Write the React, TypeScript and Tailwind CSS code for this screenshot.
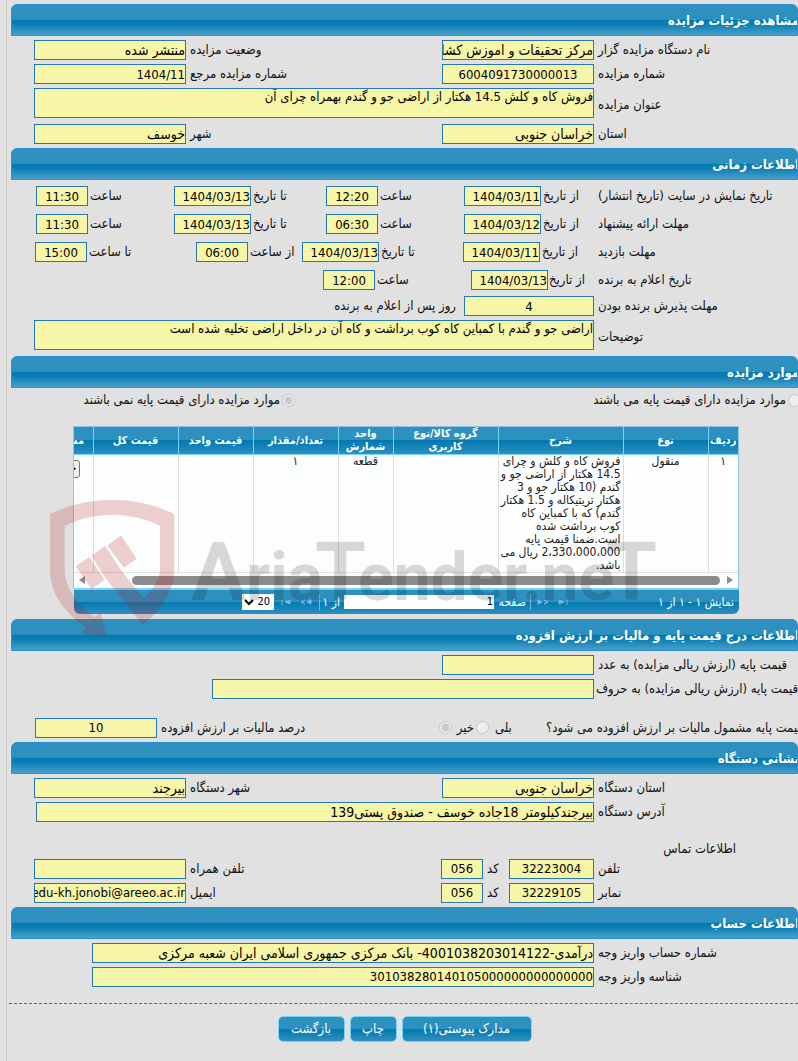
import React from "react";

function SectionTitle({ children }: { children: React.ReactNode }) {
    return (
        <h2 className="h-8 overflow-hidden rounded-t-md border border-[#2b8edb] bg-[linear-gradient(to_bottom,#2e90bf_0%,#2e90bf_48%,#0079b1_50%,#0b7fb4_65%,#4a9fc8_100%)] text-[13px] leading-[32px] font-bold text-white">
            <span className="-mr-[2px] block whitespace-nowrap">{children}</span>
        </h2>
    );
}

interface FieldProps {
    id: string;
    label: string;
    value?: string;
    labelClass: string;
    inputClass: string;
}

function Field({ id, label, value = "", labelClass, inputClass }: FieldProps) {
    // Persian values are set one step larger than plain numbers
    const size = /[آ-ی]/.test(value) ? "text-[14px]" : "text-[13px]";
    return (
        <>
            <label htmlFor={id} className={`flex justify-end whitespace-nowrap ${labelClass}`}>
                {label}
            </label>
            <input
                id={id}
                readOnly
                defaultValue={value}
                className={`h-5 border border-[#2478ab] bg-[#f7f5a8] p-0 text-black outline-none ${size} ${inputClass}`}
            />
        </>
    );
}

function AreaField({ id, label, value }: { id: string; label: string; value: string }) {
    return (
        <div className="mt-1 flex items-center">
            <label htmlFor={id} className="flex w-51 shrink-0 justify-end pt-1 pl-1 whitespace-nowrap">
                {label}
            </label>
            <textarea
                id={id}
                readOnly
                defaultValue={value}
                className="h-[30px] min-w-0 flex-1 resize-none overflow-hidden border border-[#2478ab] bg-[#f7f5a8] p-0 text-[13px] leading-4 text-black outline-none"
            />
        </div>
    );
}

const mainLabel = "w-51 shrink-0 pl-1";
const wideInput = "w-38 shrink-0";
const dateInput = "w-[77px] shrink-0";
const timeInput = "w-13 shrink-0 text-center";

const columns = [
    { title: "ردیف", width: "w-[30px]", value: "۱" },
    { title: "نوع", width: "w-[85px]", value: "منقول" },
    {
        title: "شرح",
        width: "w-[125px]",
        value: "فروش کاه و کلش و چرای\n14.5 هکتار از اراضی جو و\nگندم (10 هکتار جو و 3\nهکتار تریتیکاله و 1.5 هکتار\nگندم) که با کمباین کاه\nکوب برداشت شده\nاست.ضمنا قیمت پایه\n2،330،000،000 ریال می\nباشد.",
    },
    { title: "گروه کالا/نوع\nکاربری", width: "w-[105px]", value: "" },
    { title: "واحد\nشمارش", width: "w-[55px]", value: "قطعه" },
    { title: "تعداد/مقدار", width: "w-[85px]", value: "۱" },
    { title: "قیمت واحد", width: "w-[75px]", value: "" },
    { title: "قیمت کل", width: "w-[85px]", value: "" },
    { title: "مشخصات کالا", width: "w-[85px]", value: "جزئیات" },
];

function PagerIcon({ label, path }: { label: string; path: string }) {
    return (
        <button type="button" aria-label={label} className="h-3 w-3 shrink-0">
            <svg viewBox="0 0 12 12" className="h-3 w-3">
                <path d={path} className="fill-[#7db8d8] stroke-[#7db8d8]" />
            </svg>
        </button>
    );
}

function ItemsGrid() {
    return (
        <div className="relative mr-[59px] ml-[62px]">
            <div className="overflow-hidden border border-b-0 border-[#8cc3e6] bg-[#fcfdfd]">
                <table className="w-[730px] table-fixed border-collapse text-[12px] leading-[13px]">
                    <thead>
                        <tr className="h-[27px] bg-[linear-gradient(to_bottom,#2e90bf_0%,#2e90bf_48%,#0079b1_50%,#2e90bf_100%)] text-[11px] text-white">
                            {columns.map((c) => (
                                <th key={c.title} className={`border-l border-b border-[#77d5f7] p-0 text-center align-middle font-bold whitespace-pre ${c.width}`}>
                                    {c.title}
                                </th>
                            ))}
                        </tr>
                    </thead>
                    <tbody>
                        <tr>
                            {columns.map((c, i) => (
                                <td
                                    key={c.title}
                                    className={`border-l border-b border-[#dddddd] p-0 align-top text-[#222] ${i === 2 ? "pr-[2px] text-right whitespace-pre" : "text-center"}`}
                                >
                                    {i === 8 ? (
                                        <button type="button" className="mt-[5px] h-[18px] w-[58px] rounded-[3px] border border-[#767676] bg-[#efefef] pr-[2px] text-right text-black">
                                            {c.value}
                                        </button>
                                    ) : (
                                        c.value
                                    )}
                                </td>
                            ))}
                        </tr>
                    </tbody>
                </table>
                <div className="flex h-[15px] items-center gap-[7px] px-[5px]">
                    <svg viewBox="0 0 6 8" className="h-2 w-1.5 fill-[#8b8b8b]">
                        <path d="M0 0L6 4L0 8Z" />
                    </svg>
                    <div className="ml-[40px] h-[9px] flex-1 rounded-full bg-[#8b8b8b]" />
                    <svg viewBox="0 0 6 8" className="h-2 w-1.5 fill-[#8b8b8b]">
                        <path d="M6 0L0 4L6 8Z" />
                    </svg>
                </div>
            </div>

            {/* Pager */}
            <div className="ml-px flex h-[26px] items-center rounded-b-md border-t-2 border-[#77d5f7] bg-[linear-gradient(to_bottom,#2e90bf_0%,#2e90bf_48%,#0079b1_50%,#2e90bf_100%)] px-[5px] text-[12px] whitespace-nowrap text-white">
                <span className="w-[165px]">نمایش ۱ - ۱ از ۱</span>
                <PagerIcon label="آخرین" path="M2 4L7 6L2 8ZM10 3V9" />
                <span className="w-2" />
                <PagerIcon label="بعدی" path="M1 4L5 6L1 8ZM7 4L11 6L7 8L11 6Z" />
                <span className="mr-[6px] h-4 w-px bg-[#77b5d8]" />
                <label htmlFor="page" className="mr-1 w-8">صفحه</label>
                <input id="page" defaultValue="1" className="h-[14px] w-[150px] bg-white px-px text-[11px] text-black" />
                <span className="mr-1 w-5">از ۱</span>
                <span className="h-4 w-px bg-[#77b5d8]" />
                <span className="w-[7px]" />
                <PagerIcon label="قبلی" path="M11 4L7 6L11 8ZM5 4L1 6L5 8L1 6Z" />
                <span className="w-2" />
                <PagerIcon label="اولین" path="M10 4L5 6L10 8ZM2 3V9" />
                <select aria-label="تعداد در صفحه" defaultValue="20" className="mr-[6px] h-4 w-8 bg-white text-[11px] text-black">
                    <option>20</option>
                </select>
            </div>

            {/* Watermark */}
            <div aria-hidden="true" className="pointer-events-none absolute top-[72px] -left-[23px] flex items-start" dir="ltr">
                <svg viewBox="150 265 375 420" className="h-[140px] w-[125px] shrink-0 fill-[#b4141a]/20">
                    <path d="M150 313Q240 270 338 270Q435 270 523 313V480C523 545 480 605 428 646L320 510L362 480L432 568C465 530 480 505 480 480V348Q410 315 338 315Q265 315 194 348V480C194 540 240 590 285 622L303 608L320 682L243 672L258 655C200 610 150 560 150 480Z" />
                    <path d="M322 408L363 377L410 447L372 474ZM274 438L316 408L362 480L320 510ZM227 470L268 442L314 511L275 538Z" />
                </svg>
                <span className="mt-[26px] ml-4 font-['Roboto',sans-serif] text-[66px] leading-[96px] font-bold whitespace-nowrap text-black/15">
                    <span className="text-[82px]">A</span>ria<span className="-mx-2 text-[82px]">T</span>ender.ne<span className="-ml-2 text-[82px]">T</span>
                </span>
            </div>
        </div>
    );
}

function ActionButton({ children, width }: { children: React.ReactNode; width: string }) {
    return (
        <button
            type="button"
            className={`h-[26px] rounded-[5px] border border-[#77d5f7] bg-[linear-gradient(to_bottom,#2e90bf_0%,#2e90bf_48%,#0079b1_50%,#2e90bf_100%)] text-[13px] text-white ${width}`}
        >
            {children}
        </button>
    );
}

export default function App() {
    return (
        <div className="min-h-screen overflow-hidden bg-[#e1e1e1] pl-[6px]" dir="rtl">
            <main className="min-h-screen border-l border-[#c8c8c8] pt-1 pb-[18px] pl-1 font-['DejaVu_Sans_Condensed','DejaVu_Sans',sans-serif] text-[13px] leading-4 text-[#111]">
                <SectionTitle>مشاهده جزئیات مزایده</SectionTitle>
                <div className="pt-1 pb-1 pl-[23px]">
                    <div className="flex items-center">
                        <Field id="org" label="نام دستگاه مزایده گزار" value="مرکز تحقیقات و اموزش کشاورزی" labelClass={mainLabel} inputClass={wideInput} />
                        <Field id="status" label="وضعیت مزایده" value="منتشر شده" labelClass="flex-1 pl-1" inputClass={wideInput} />
                    </div>
                    <div className="mt-1 flex items-center">
                        <Field id="number" label="شماره مزایده" value="6004091730000013" labelClass={mainLabel} inputClass="w-38 shrink-0 text-center" />
                        <Field id="ref" label="شماره مزایده مرجع" value="1404/11" labelClass="flex-1 pl-1" inputClass={wideInput} />
                    </div>
                    <AreaField id="subject" label="عنوان مزایده" value="فروش کاه و کلش 14.5 هکتار از اراضی جو و گندم بهمراه چرای آن" />
                    <div className="mt-[6px] flex items-center">
                        <Field id="province" label="استان" value="خراسان جنوبی" labelClass={mainLabel} inputClass={wideInput} />
                        <Field id="city" label="شهر" value="خوسف" labelClass="flex-1 pl-1" inputClass={wideInput} />
                    </div>
                </div>

                <SectionTitle>اطلاعات زمانی</SectionTitle>
                <div className="pt-[6px] pb-[6px] pl-[23px]">
                    <div className="flex flex-col gap-2">
                        <div className="flex items-center">
                            <span className="flex w-51 shrink-0 justify-end pl-1">تاریخ نمایش در سایت (تاریخ انتشار)</span>
                            <Field id="show-from" label="از تاریخ" value="1404/03/11" labelClass="w-[53px] pl-[2px]" inputClass={dateInput} />
                            <Field id="show-from-t" label="ساعت" value="12:20" labelClass="w-[86px] pl-[2px]" inputClass={timeInput} />
                            <Field id="show-to" label="تا تاریخ" value="1404/03/13" labelClass="w-[75px] pl-[2px]" inputClass={dateInput} />
                            <Field id="show-to-t" label="ساعت" value="11:30" labelClass="w-[86px] pl-[2px]" inputClass={timeInput} />
                        </div>
                        <div className="flex items-center">
                            <span className="flex w-51 shrink-0 justify-end pl-1">مهلت ارائه پیشنهاد</span>
                            <Field id="offer-from" label="از تاریخ" value="1404/03/12" labelClass="w-[53px] pl-[2px]" inputClass={dateInput} />
                            <Field id="offer-from-t" label="ساعت" value="06:30" labelClass="w-[86px] pl-[2px]" inputClass={timeInput} />
                            <Field id="offer-to" label="تا تاریخ" value="1404/03/13" labelClass="w-[75px] pl-[2px]" inputClass={dateInput} />
                            <Field id="offer-to-t" label="ساعت" value="11:30" labelClass="w-[86px] pl-[2px]" inputClass={timeInput} />
                        </div>
                        <div className="flex items-center">
                            <span className="flex w-51 shrink-0 justify-end pl-1">مهلت بازدید</span>
                            <Field id="visit-from" label="از تاریخ" value="1404/03/11" labelClass="w-[54px] pl-[2px]" inputClass={dateInput} />
                            <Field id="visit-to" label="تا تاریخ" value="1404/03/13" labelClass="w-[84px] pl-[2px]" inputClass={dateInput} />
                            <Field id="visit-from-t" label="از ساعت" value="06:00" labelClass="w-[54px] pl-[2px]" inputClass={timeInput} />
                            <Field id="visit-to-t" label="تا ساعت" value="15:00" labelClass="w-[109px] pl-[2px]" inputClass={timeInput} />
                        </div>
                        <div className="flex items-center">
                            <span className="flex w-51 shrink-0 justify-end pl-1">تاریخ اعلام به برنده</span>
                            <Field id="winner" label="از تاریخ" value="1404/03/13" labelClass="w-[46px] pl-px" inputClass={dateInput} />
                            <Field id="winner-t" label="ساعت" value="12:00" labelClass="w-24 pl-[2px]" inputClass={timeInput} />
                        </div>
                    </div>
                    <div className="mt-[6px] flex items-center">
                        <Field id="accept" label="مهلت پذیرش برنده بودن" value="4" labelClass={mainLabel} inputClass="w-[130px] shrink-0 text-center" />
                        <span className="mr-2">روز پس از اعلام به برنده</span>
                    </div>
                    <AreaField id="notes" label="توضیحات" value="اراضی جو و گندم با کمباین کاه کوب برداشت و کاه آن در داخل اراضی تخلیه شده است" />
                </div>

                <SectionTitle>موارد مزایده</SectionTitle>
                <div className="flex h-[38px] items-start pt-1">
                    <div className="-mr-[3px] flex w-[509px] items-center gap-[2px]">
                        <input type="radio" id="base-yes" name="base" disabled className="h-[13px] w-[13px]" />
                        <label htmlFor="base-yes">موارد مزایده دارای قیمت پایه می باشند</label>
                    </div>
                    <div className="-mr-[3px] flex items-center gap-[2px]">
                        <input type="radio" id="base-no" name="base" disabled defaultChecked className="h-[13px] w-[13px]" />
                        <label htmlFor="base-no">موارد مزایده دارای قیمت پایه نمی باشند</label>
                    </div>
                </div>
                <ItemsGrid />

                <div className="mt-[5px]">
                    <SectionTitle>اطلاعات درج قیمت پایه و مالیات بر ارزش افزوده</SectionTitle>
                </div>
                <div className="pt-1 pb-1 pl-6">
                    <div className="flex items-center">
                        <Field id="price" label="قیمت پایه (ارزش ریالی مزایده) به عدد" labelClass={mainLabel} inputClass={wideInput} />
                    </div>
                    <div className="mt-1 flex items-center">
                        <Field id="price-text" label="قیمت پایه (ارزش ریالی مزایده) به حروف" labelClass="w-51 shrink-0 pl-[2px]" inputClass="w-[382px] shrink-0" />
                    </div>
                    <div className="mt-[19px] flex items-center">
                        <span className="flex w-63 shrink-0 justify-end whitespace-nowrap">قیمت پایه مشمول مالیات بر ارزش افزوده می شود؟</span>
                        <label htmlFor="vat-yes" className="flex w-[51px] justify-end">بلی</label>
                        <input type="radio" id="vat-yes" name="vat" disabled className="mr-[6px] h-[13px] w-[13px]" />
                        <label htmlFor="vat-no" className="mr-[2px] w-[18px]">خیر</label>
                        <input type="radio" id="vat-no" name="vat" disabled defaultChecked className="mr-1 h-[13px] w-[13px]" />
                        <Field id="vat" label="درصد مالیات بر ارزش افزوده" value="10" labelClass="flex-1 pl-1" inputClass="w-[122px] shrink-0 text-center" />
                    </div>
                </div>

                <SectionTitle>نشانی دستگاه</SectionTitle>
                <div className="pt-1 pb-1 pl-[23px]">
                    <div className="flex items-center">
                        <Field id="org-province" label="استان دستگاه" value="خراسان جنوبی" labelClass={mainLabel} inputClass={wideInput} />
                        <Field id="org-city" label="شهر دستگاه" value="بیرجند" labelClass="flex-1 pl-1" inputClass={wideInput} />
                    </div>
                    <div className="mt-1 flex items-center">
                        <Field id="address" label="آدرس دستگاه" value="بیرجندکیلومتر 18جاده خوسف - صندوق پستی139" labelClass={mainLabel} inputClass="ml-[2px] min-w-0 flex-1" />
                    </div>
                    <h3 className="mt-[19px] mr-[62px]">اطلاعات تماس</h3>
                    <div className="mt-[2px] flex items-center">
                        <Field id="phone" label="تلفن" value="32223004" labelClass={mainLabel} inputClass="w-[85px] shrink-0 text-center" />
                        <Field id="phone-code" label="کد" value="056" labelClass="w-[26px] pl-1" inputClass="w-[42px] shrink-0 text-center" />
                        <Field id="mobile" label="تلفن همراه" labelClass="flex-1 pl-1" inputClass={wideInput} />
                    </div>
                    <div className="mt-1 flex items-center">
                        <Field id="fax" label="نمابر" value="32229105" labelClass={mainLabel} inputClass="w-[85px] shrink-0 text-center" />
                        <Field id="fax-code" label="کد" value="056" labelClass="w-[26px] pl-1" inputClass="w-[42px] shrink-0 text-center" />
                        <Field id="email" label="ایمیل" value="edu-kh.jonobi@areeo.ac.ir" labelClass="flex-1 pl-1" inputClass={wideInput} />
                    </div>
                </div>

                <SectionTitle>اطلاعات حساب</SectionTitle>
                <div className="pt-1 pb-4 pl-[81px]">
                    <div className="flex items-center">
                        <Field id="account" label="شماره حساب واریز وجه" value="درآمدی-4001038203014122- بانک مرکزی جمهوری اسلامی ایران شعبه مرکزی" labelClass={mainLabel} inputClass="min-w-0 flex-1" />
                    </div>
                    <div className="mt-1 flex items-center">
                        <Field id="deposit" label="شناسه واریز وجه" value="301038280140105000000000000000" labelClass={mainLabel} inputClass="min-w-0 flex-1" />
                    </div>
                </div>

                <div className="-ml-[2px] border-t border-dashed border-t-[#2478ab]" />
                <div className="mt-3 flex justify-center gap-[5px]">
                    <ActionButton width="w-[130px]">مدارک پیوستی(۱)</ActionButton>
                    <ActionButton width="w-[47px]">چاپ</ActionButton>
                    <ActionButton width="w-[67px]">بازگشت</ActionButton>
                </div>
            </main>
        </div>
    );
}
